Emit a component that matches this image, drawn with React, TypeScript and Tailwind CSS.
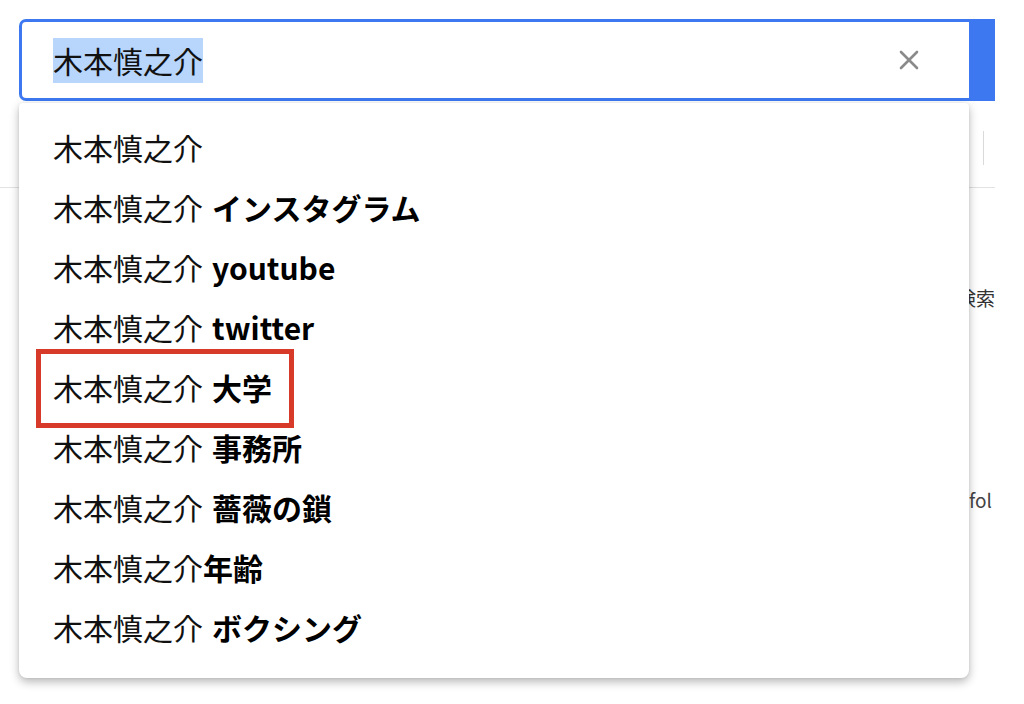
import React from "react";

const base = "木本慎之介";

const suggestions: { rest: string; space: boolean }[] = [
  { rest: "", space: false },
  { rest: "インスタグラム", space: true },
  { rest: "youtube", space: true },
  { rest: "twitter", space: true },
  { rest: "大学", space: true },
  { rest: "事務所", space: true },
  { rest: "薔薇の鎖", space: true },
  { rest: "年齢", space: false },
  { rest: "ボクシング", space: true },
];

export default function App() {
  return (
    <div
      className="w-[1024px] h-[704px] bg-white overflow-hidden relative text-[#111]"
      style={{ fontFamily: '"Noto Sans CJK JP", "Noto Sans", sans-serif' }}
    >
      {/* Page behind the dropdown, cut off at the right */}
      <div className="w-[995px] h-full overflow-hidden relative">
        {/* Search bar */}
        <div className="flex pt-[19px] pl-[19px] h-[101px]">
          <div className="w-[950px] h-[82px] border-[3px] border-r-0 border-[#3d78f0] rounded-l-[7px] flex items-center pl-[31px] pr-[48px]">
            <span className="bg-[#b8d5fb] text-[30px] leading-[45px] text-[#111] whitespace-nowrap">
              {base}
            </span>
            <div className="ml-auto flex items-center justify-center w-[24px] h-[24px]">
              <svg width="22" height="22" viewBox="0 0 22 22">
                <path d="M3 3 L19 19 M19 3 L3 19" stroke="#8a8a8a" strokeWidth="2.6" strokeLinecap="round" />
              </svg>
            </div>
          </div>
          <div className="w-[26px] h-[82px] bg-[#3d78f0]" />
        </div>

        {/* Tabs row */}
        <div className="h-[87px] border-b border-[#e2e2e2] flex items-start justify-end pr-[11px] pt-[30px]">
          <div className="w-px h-[34px] bg-[#dadada]" />
        </div>

        {/* Content lines */}
        <div className="flex justify-end pt-[97px] text-[19px] text-[#333] leading-[26px] whitespace-nowrap">
          で検索
        </div>
        <div className="pt-[176px] pl-[969px] text-[19px] text-[#444] leading-[26px] whitespace-nowrap">
          fol
        </div>
      </div>

      {/* Suggestions dropdown */}
      <div className="absolute left-[19px] top-[103px] w-[950px] h-[575px] bg-white rounded-b-[8px] rounded-t-[4px] shadow-[0_4px_10px_rgba(0,0,0,0.28),0_0_3px_rgba(0,0,0,0.08)] pt-[14px]">
        {suggestions.map((s, i) => (
          <div key={i} className="relative h-[60px] flex items-center pl-[34px] text-[30px] whitespace-nowrap">
            <span>{base}</span>
            {s.rest && (
              <span className={`font-bold text-black ${s.space ? "ml-[9px]" : ""}`}>{s.rest}</span>
            )}
            {i === 4 && (
              <div className="absolute left-[17px] top-[-8px] w-[258px] h-[79px] border-[5px] border-[#d83a2a]" />
            )}
          </div>
        ))}
      </div>
    </div>
  );
}
